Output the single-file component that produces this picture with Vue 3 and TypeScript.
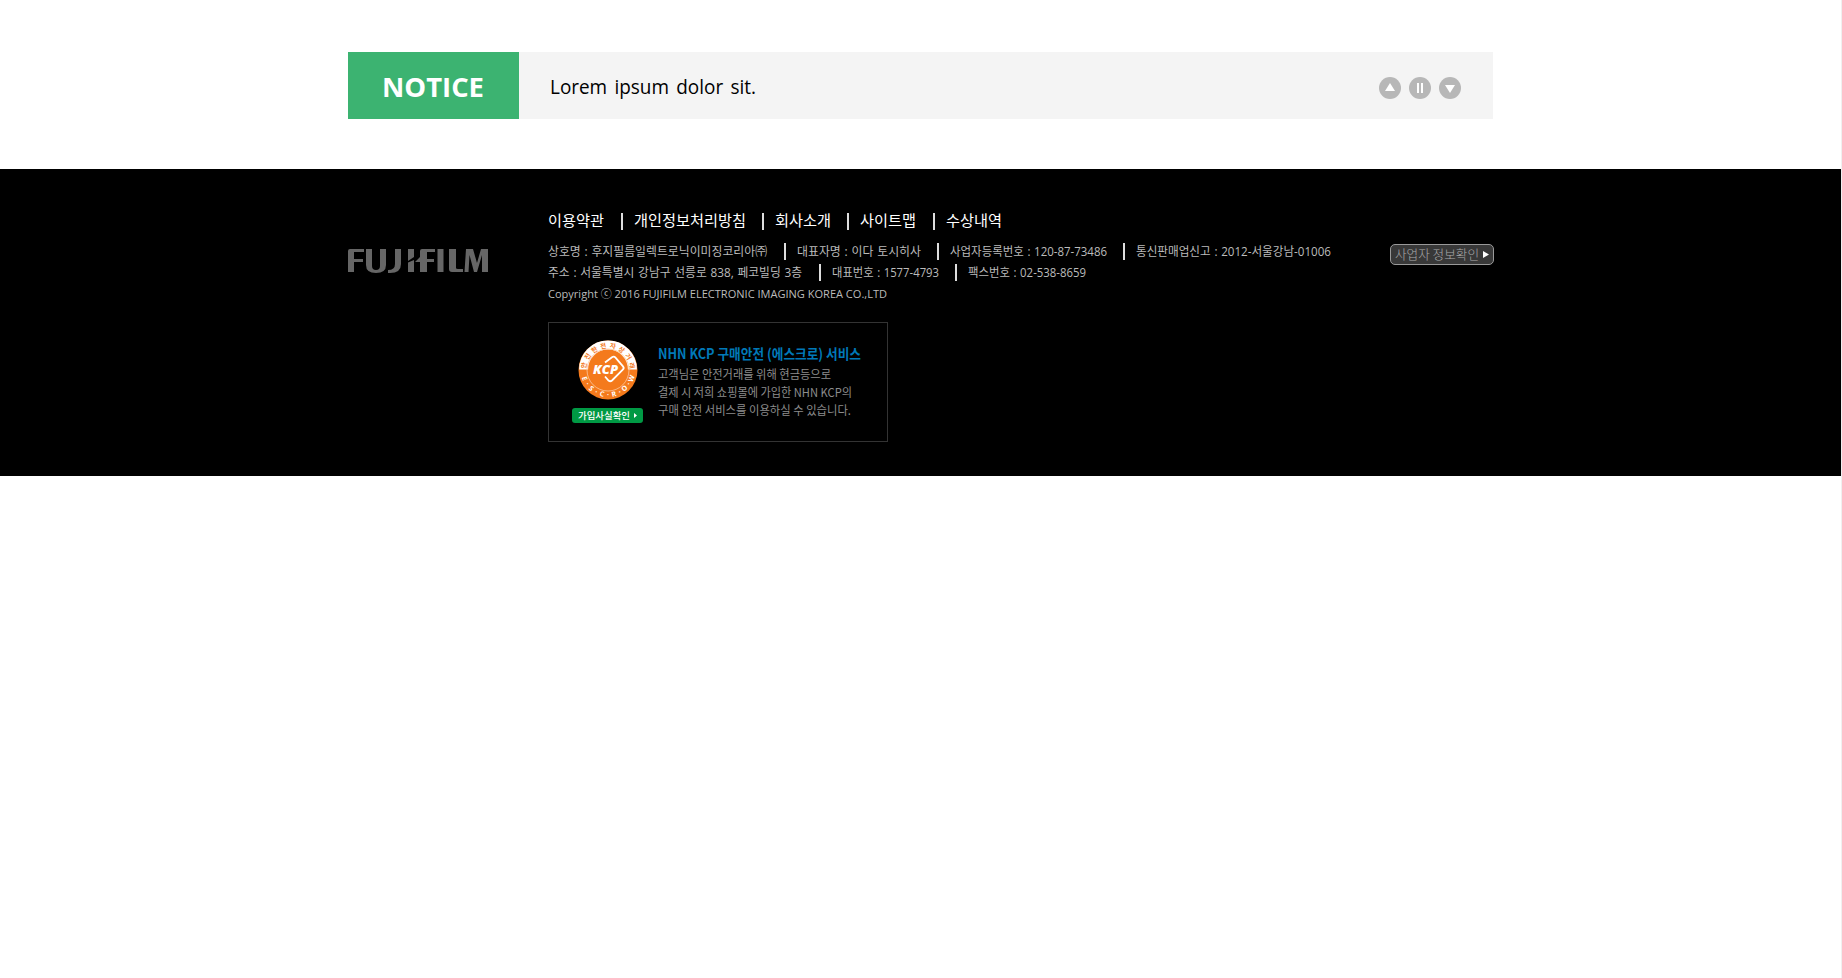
<script setup lang="ts">
interface Item { text: string; box: number; len: number }
interface Row { kind: string; items: Item[] }

// box: width of the cell up to the next divider, len: width of the text run
const rows: Row[] = [
  {
    kind: 'links',
    items: [
      { text: '이용약관', box: 73, len: 56 },
      { text: '개인정보처리방침', box: 141, len: 112 },
      { text: '회사소개', box: 85, len: 56 },
      { text: '사이트맵', box: 86, len: 56 },
      { text: '수상내역', box: 90, len: 56 },
    ],
  },
  {
    kind: 'company',
    items: [
      { text: '상호명 : 후지필름일렉트로닉이미징코리아㈜', box: 236, len: 219 },
      { text: '대표자명 : 이다 토시히사', box: 153, len: 124 },
      { text: '사업자등록번호 : 120-87-73486', box: 186, len: 157 },
      { text: '통신판매업신고 : 2012-서울강남-01006', box: 210, len: 195 },
    ],
  },
  {
    kind: 'contact',
    items: [
      { text: '주소 : 서울특별시 강남구 선릉로 838, 페코빌딩 3층', box: 271, len: 254 },
      { text: '대표번호 : 1577-4793', box: 136, len: 107 },
      { text: '팩스번호 : 02-538-8659', box: 130, len: 118 },
    ],
  },
  {
    kind: 'copyright',
    items: [{ text: 'Copyright ⓒ 2016 FUJIFILM ELECTRONIC IMAGING KOREA CO.,LTD', box: 340, len: 339 }],
  },
]

const escrowLines: { text: string; len: number }[] = [
  { text: '고객님은 안전거래를 위해 현금등으로', len: 173 },
  { text: '결제 시 저희 쇼핑몰에 가입한 NHN KCP의', len: 194 },
  { text: '구매 안전 서비스를 이용하실 수 있습니다.', len: 193 },
]

const topRing = [...'안전한전자상거래'].map((ch, i) => ({ ch, angle: -79 + i * 22.6 }))
const bottomRing = [...'E·S·C·R·O·W'].map((ch, i) => ({ ch, angle: 70 - i * 14 }))
</script>

<template>
  <div class="page">
    <section class="notice">
      <h2 class="notice-title">
        <svg width="102" height="28"><text x="0" y="23" textLength="102" lengthAdjust="spacingAndGlyphs">NOTICE</text></svg>
      </h2>
      <p class="notice-text">
        <svg width="206" height="28"><text x="0" y="22" textLength="206" lengthAdjust="spacingAndGlyphs">Lorem ipsum dolor sit.</text></svg>
      </p>
      <div class="controls">
        <button type="button" aria-label="Previous">
          <svg viewBox="0 0 22 22"><circle cx="11" cy="11" r="11" /><path d="M11 6 16 14H6Z" /></svg>
        </button>
        <button type="button" aria-label="Pause">
          <svg viewBox="0 0 22 22"><circle cx="11" cy="11" r="11" /><path d="M8 6h2v10H8ZM12 6h2v10h-2Z" /></svg>
        </button>
        <button type="button" aria-label="Next">
          <svg viewBox="0 0 22 22"><circle cx="11" cy="11" r="11" /><path d="M11 16 6 8H16Z" /></svg>
        </button>
      </div>
    </section>

    <footer class="footer">
      <div class="inner">
        <svg class="logo" viewBox="0 0 141 25" role="img" aria-label="FUJIFILM">
          <path d="M0 3Q0 1 2 1H16V4H6V11H15V14H6V24H0Z" />
          <path d="M18 1H24V18Q24 22 28 22Q32 22 32 18V1H38V17Q38 25 28 25Q18 25 18 17Z" />
          <path d="M47 1H53V16Q53 25 42 25H40V22Q47 22 47 16Z" />
          <path d="M60 1H66V9L60 13ZM60 14.5 66 12V24H60Z" />
          <path d="M74 1H87V4H79V11H86V14H79V24H72V14H67L72 9V3Q72 1 74 1Z" />
          <path d="M89.5 1H95.5V24H89.5Z" />
          <path d="M101 1H108V20Q108 21 110 21H115V24H104Q101 24 101 21Z" />
          <path d="M116.5 24 118 1H125L129 15 133 1H140V24H134V7L129 24H126L121.5 7 120.5 24Z" />
        </svg>

        <div class="info">
          <div v-for="row in rows" :key="row.kind" class="row" :class="row.kind">
            <div v-for="item in row.items" :key="item.text" class="cell" :style="{ width: item.box + 'px' }">
              <svg :width="item.len" height="17">
                <text x="0" y="13" :textLength="item.len" lengthAdjust="spacingAndGlyphs">{{ item.text }}</text>
              </svg>
            </div>
          </div>

          <div class="escrow">
            <div class="mark">
              <svg class="seal" viewBox="0 0 60 60">
                <circle cx="30" cy="30" r="29.5" fill="#f47a1c" />
                <path d="M5.6 29.5A24.4 24.4 0 0 1 54.4 29.5" fill="none" stroke="#fff" stroke-width="9" />
                <circle cx="30" cy="30" r="21" fill="none" stroke="#fbc8a0" stroke-width="0.8" />
                <text
                  v-for="(g, i) in topRing" :key="'t' + i" class="ring top"
                  x="30" y="8" :transform="`rotate(${g.angle} 30 30)`"
                >{{ g.ch }}</text>
                <text
                  v-for="(g, i) in bottomRing" :key="'b' + i" class="ring bottom"
                  x="30" y="57.2" :transform="`rotate(${g.angle} 30 30)`"
                >{{ g.ch }}</text>
                <path
                  d="M27 22.5 34 17.2Q36 16 37.5 17.6L45 26.3Q46.5 28 44.8 29.7L34 40.5Q32.3 42 30.5 40.5L27 36.5"
                  fill="none" stroke="#fff" stroke-width="1.8"
                />
                <text class="kcp" x="15" y="34" textLength="25" lengthAdjust="spacingAndGlyphs">KCP</text>
              </svg>
              <div class="confirm">
                <svg width="52" height="13"><text x="0" y="10" textLength="52" lengthAdjust="spacingAndGlyphs">가입사실확인</text></svg>
                <svg width="3" height="5" viewBox="0 0 3 5"><path d="M0 0 3 2.5 0 5Z" /></svg>
              </div>
            </div>
            <div class="copy">
              <svg class="heading" width="203" height="22">
                <text x="0" y="16" textLength="203" lengthAdjust="spacingAndGlyphs">NHN KCP 구매안전 (에스크로) 서비스</text>
              </svg>
              <svg v-for="line in escrowLines" :key="line.text" :width="line.len" height="18">
                <text x="0" y="14" :textLength="line.len" lengthAdjust="spacingAndGlyphs">{{ line.text }}</text>
              </svg>
            </div>
          </div>
        </div>

        <a class="biz">
          <svg width="84" height="17"><text x="0" y="13.3" textLength="84" lengthAdjust="spacingAndGlyphs">사업자 정보확인</text></svg>
          <svg width="6" height="7" viewBox="0 0 6 7"><path d="M0 0 6 3.5 0 7Z" /></svg>
        </a>
      </div>
    </footer>
  </div>
</template>

<style>
body { background: #fff; }
</style>

<style scoped>
.page {
  box-sizing: border-box;
  min-height: 978px;
  padding-top: 52px;
  border-right: 1px solid #f0f0f0;
  font-family: "Open Sans", "Noto Sans CJK KR", sans-serif;
}
svg { display: block; flex: none; overflow: visible; }
text { fill: currentColor; }
h2, p { margin: 0; }
.notice { display: flex; width: 1145px; height: 67px; margin: 0 0 50px 348px; background: #f4f4f4; }
.notice-title { display: flex; box-sizing: border-box; width: 171px; height: 67px; padding: 22px 0 0 34px; background: #3cb371; color: #fff; font-size: 27.5px; font-weight: 700; }
.notice-text { margin: 20px 0 0 31px; font-size: 19.5px; color: #000; word-spacing: 2.5px; }
.controls { display: flex; gap: 8px; margin: 25px 32px 0 auto; }
button { display: block; width: 22px; height: 22px; padding: 0; border: 0; background: none; }
button circle { fill: #b7b7b7; }
button path { fill: #fff; }
.footer { height: 307px; background: #000; }
.inner { display: flex; align-items: flex-start; width: 1146px; margin-left: 348px; }
.logo { width: 141px; height: 25px; margin-top: 79px; fill: #666; }
.info { margin-left: 59px; padding-top: 44px; }
.row { display: flex; height: 17px; margin-bottom: 4px; font-size: 12px; color: #bbb; word-spacing: 0.7px; }
.links { margin-bottom: 13px; font-size: 15px; color: #fff; }
.copyright { font-size: 11.4px; word-spacing: 0; }
.cell { box-sizing: border-box; }
.cell + .cell { padding-left: 10.6px; border-left: 2px solid #ddd; }
.escrow { box-sizing: border-box; display: flex; width: 340px; height: 120px; margin-top: 20px; border: 1px solid #333; }
.mark { width: 71px; margin: 17px 0 0 23px; }
.seal { width: 60px; height: 60px; margin-left: 5.5px; }
.ring { text-anchor: middle; font-weight: 700; }
.top { fill: #f47a1c; font-size: 6.5px; }
.bottom { fill: #fff; font-size: 7px; }
.kcp { fill: #fff; font-size: 11.5px; font-weight: 800; font-style: italic; }
.confirm { display: flex; align-items: center; justify-content: center; gap: 4px; height: 15px; margin-top: 8px; border-radius: 3px; background: #009944; color: #fff; fill: #fff; font-size: 9.5px; font-weight: 500; }
.copy { margin: 20px 0 0 15px; color: #8c8c8c; font-family: "Noto Sans CJK KR", sans-serif; font-size: 12px; }
.heading { color: #0079b8; font-size: 14px; font-weight: 700; }
.biz { box-sizing: border-box; display: flex; align-items: center; gap: 4px; width: 104px; height: 21px; margin: 75px 0 0 auto; padding-left: 4px; border: 1px solid #999; border-radius: 5px; background: #383838; color: #aaa; fill: #fff; font-family: "Noto Sans CJK KR", sans-serif; font-size: 13px; font-weight: 300; }
</style>
